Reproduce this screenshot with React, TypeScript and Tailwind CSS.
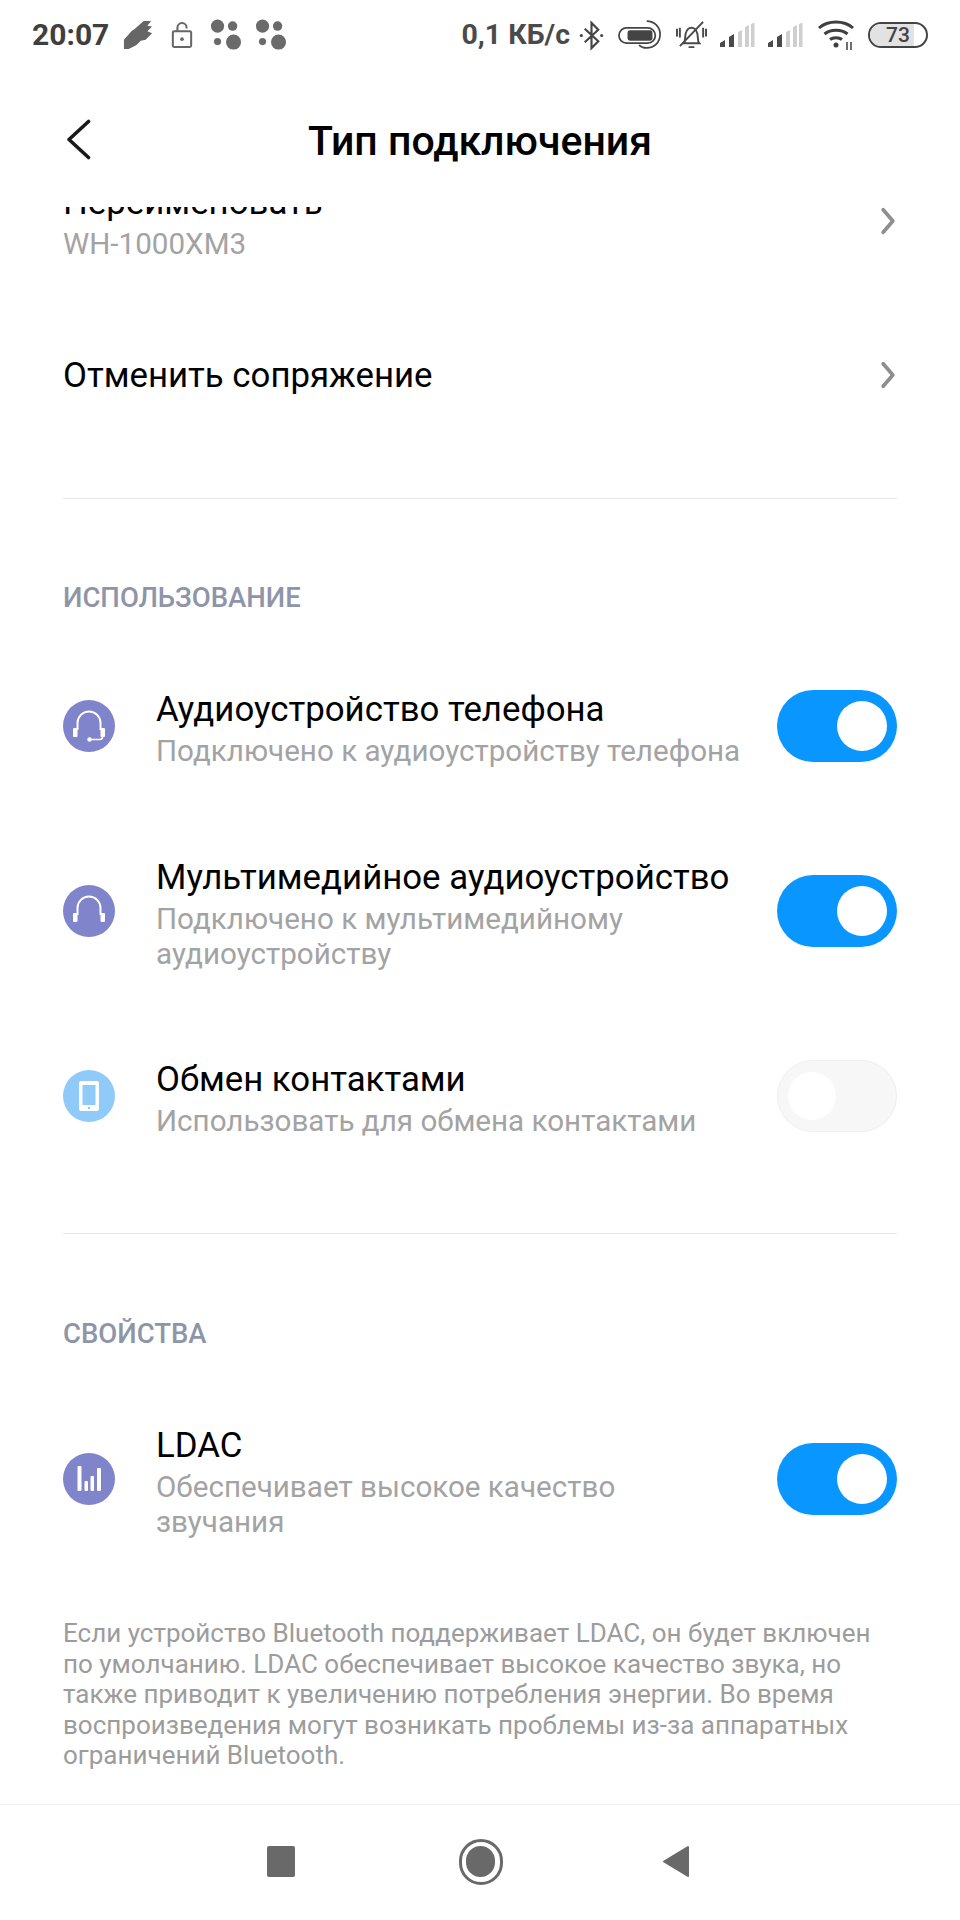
import { ReactNode } from 'react';

const Toggle = ({ on = true }: { on?: boolean }) =>
  on ? (
    <div className="flex h-[72px] w-[120px] shrink-0 items-center justify-end rounded-full bg-[#0a96ff] pr-[10px]">
      <div className="h-[50px] w-[50px] rounded-full bg-white" />
    </div>
  ) : (
    <div className="flex h-[72px] w-[120px] shrink-0 items-center rounded-full border border-[#efefef] bg-[#f7f7f7] pl-[10px]">
      <div className="h-[48px] w-[48px] rounded-full bg-white" />
    </div>
  );

const Chevron = ({ className }: { className?: string }) => (
  <svg viewBox="0 0 14 26" className={className} fill="none" stroke="#8e8e8e" strokeWidth="3.4" strokeLinecap="round" strokeLinejoin="round">
    <path d="M2.5 2.5 11.5 13 2.5 23.5" />
  </svg>
);

const HeadsetIcon = ({ mic = false }: { mic?: boolean }) => (
  <svg viewBox="0 0 52 52" className="h-[52px] w-[52px]">
    <circle cx="26" cy="26" r="26" fill="#7f84cb" />
    <path d="M14.5 30V23a11.5 11.5 0 0 1 23 0v7" fill="none" stroke="#fff" strokeWidth="2" />
    <rect x="10" y="28" width="4.5" height="9" rx="1" fill="#fff" />
    <rect x="37.5" y="28" width="4.5" height="9" rx="1" fill="#fff" />
    {mic && (
      <>
        <path d="M39.5 37q0 2.500-3 2.500H28" fill="none" stroke="#fff" strokeWidth="1.600" />
        <circle cx="26.500" cy="39.500" r="2.200" fill="#fff" />
      </>
    )}
  </svg>
);

const PhoneIcon = () => (
  <svg viewBox="0 0 52 52" className="h-[52px] w-[52px]">
    <circle cx="26" cy="26" r="26" fill="#90caf9" />
    <rect x="16" y="11" width="20" height="30" rx="2" fill="#fff" />
    <rect x="19.500" y="15" width="13" height="20" fill="#90caf9" />
    <circle cx="26" cy="38" r="1.300" fill="#90caf9" />
  </svg>
);

const BarsIcon = () => (
  <svg viewBox="0 0 52 52" className="h-[52px] w-[52px]">
    <circle cx="26" cy="26" r="26" fill="#7f84cb" />
    <rect x="14.500" y="13" width="4" height="25" rx="1" fill="#fff" />
    <rect x="21.500" y="28" width="3.500" height="10" rx="1" fill="#fff" />
    <rect x="27.500" y="23" width="3.500" height="15" rx="1" fill="#fff" />
    <rect x="34" y="15" width="4" height="23" rx="1" fill="#fff" />
  </svg>
);

const Signal = () => (
  <svg viewBox="0 0 36 26" className="h-[26px] w-[36px]">
    <path d="M1 25v-4l5-3v7zM10 25v-10l5-3v13z" fill="#4a4a4a" />
    <path d="M19 25V10l4-2v17zM26 25V5l4-2v22zM32 25V2l3.500-1.500V25z" fill="#cfcfcf" />
  </svg>
);

const DotCluster = () => (
  <svg viewBox="0 0 34 34" className="h-[32px] w-[32px]">
    <circle cx="8" cy="7.500" r="7" fill="#6a6a6a" />
    <circle cx="24" cy="7.500" r="5" fill="#6a6a6a" />
    <circle cx="8" cy="24" r="3.800" fill="#6a6a6a" />
    <circle cx="25" cy="24.500" r="8" fill="#6a6a6a" />
  </svg>
);

const StatusBar = () => (
  <div className="flex h-[70px] shrink-0 items-center justify-between px-[32px] font-['Roboto',sans-serif] text-[#3f3f3f]">
    <div className="flex items-center">
      <span className="text-[30px] font-bold leading-none">20:07</span>
      <svg viewBox="0 0 32 32" className="ml-[14px] h-[30px] w-[30px]">
        <path d="M1 31V21L9 12 13 9 22 1 30 1 26 6 31 7 26 12 31 14 24 21 19 22 14 27 6 31z" fill="#666" />
      </svg>
      <svg viewBox="0 0 24 30" className="ml-[18px] h-[28px] w-[22px]" fill="none" stroke="#666" strokeWidth="2.200">
        <rect x="2" y="11" width="20" height="17" rx="1.500" />
        <path d="M7 11V7a5 5 0 0 1 10 0v1" />
        <circle cx="12" cy="19.500" r="2" fill="#666" stroke="none" />
      </svg>
      <div className="ml-[17px]"><DotCluster /></div>
      <div className="ml-[13px]"><DotCluster /></div>
    </div>
    <div className="flex items-center">
      <span className="text-[28.500px] font-bold leading-none text-[#4a4a4a]">0,1 КБ/с</span>
      <svg viewBox="0 0 26 32" className="ml-[8px] h-[31px] w-[27px]" fill="none" stroke="#444" strokeWidth="2.200">
        <path d="M6 9 20 22 13 29V3l7 7L6 23" />
        <circle cx="2.500" cy="16" r="1.600" fill="#444" stroke="none" />
        <circle cx="23.500" cy="16" r="1.600" fill="#444" stroke="none" />
      </svg>
      <svg viewBox="0 0 46 34" className="ml-[13px] h-[33px] w-[44px]" fill="none" stroke="#444" strokeWidth="1.800">
        <rect x="1" y="9" width="38" height="16" rx="8" />
        <rect x="10" y="11.500" width="26" height="11" rx="2.500" fill="#444" stroke="none" />
        <path d="M30 2c8 0 14 6 14 14s-6 14-14 14c-3 0-6-1-8-3" />
      </svg>
      <svg viewBox="0 0 32 32" className="ml-[14px] h-[31px] w-[31px]" fill="none" stroke="#4a4a4a" strokeWidth="2">
        <path d="M8 24c2-2 1-6 2-10 1-4 3-6 6-6s5 2 6 6c1 4 0 8 2 10zM13 28h6" />
        <path d="M4 27 28 2M1 9v8M4 8v10M31 9v8M28 8v10" />
      </svg>
      <div className="ml-[12px]"><Signal /></div>
      <div className="ml-[12px]"><Signal /></div>
      <svg viewBox="0 0 38 32" className="ml-[14px] h-[32px] w-[38px]" fill="none" stroke="#3f3f3f" strokeWidth="3">
        <path d="M2 9c9-8 25-8 34 0M7.500 15c6-5 17-5 23 0M13 20.500c3-2.500 9-2.500 12 0" />
        <circle cx="19" cy="26" r="2.500" fill="#3f3f3f" stroke="none" />
        <path d="M30 23v8M34 23v8" strokeWidth="1.500" />
      </svg>
      <div className="relative ml-[13px] flex h-[26px] w-[60px] items-center justify-center overflow-hidden rounded-full border-2 border-[#444]">
        <div className="absolute inset-y-0 left-0 w-[78%] bg-[#e2e2e2]" />
        <span className="relative text-[21px] font-medium leading-none text-[#444]">73</span>
      </div>
    </div>
  </div>
);

const Row = ({
  icon,
  title,
  sub,
  on = true,
  className,
}: {
  icon: ReactNode;
  title: string;
  sub: string[];
  on?: boolean;
  className?: string;
}) => (
  <div className={`flex items-center ${className ?? ''}`}>
    <div className="w-[93px] shrink-0">{icon}</div>
    <div className="min-w-0 flex-1 pt-[6px]">
      <div className="text-[34.800px] leading-[42px] text-black">{title}</div>
      <div className="mt-[4px] text-[29.600px] leading-[35px] text-[#a3a3a3]">
        {sub.map((s) => (
          <div key={s}>{s}</div>
        ))}
      </div>
    </div>
    <Toggle on={on} />
  </div>
);

const SectionLabel = ({ children, className }: { children: ReactNode; className?: string }) => (
  <div className={`text-[27.500px] font-medium leading-[32px] text-[#8f95a8] ${className ?? ''}`}>{children}</div>
);

export default function App() {
  return (
    <div className="flex h-[1920px] w-[960px] flex-col overflow-hidden bg-white font-['Roboto',sans-serif]">
      <StatusBar />

      <div className="relative flex h-[137px] shrink-0 items-center justify-center pt-[5px]">
        <svg viewBox="0 0 27 41" className="absolute left-[65px] top-[49px] h-[41px] w-[27px]" fill="none" stroke="#1a1a1a" strokeWidth="3.600" strokeLinecap="round" strokeLinejoin="round">
          <path d="M23.500 2.500 4 20.500l19.500 18" />
        </svg>
        <span className="text-[41px] font-medium leading-none text-black">Тип подключения</span>
      </div>

      <div className="min-h-0 flex-1 overflow-hidden px-[63px]">
        <div className="-mt-[26px] flex items-start justify-between">
          <div>
            <div className="text-[34.800px] leading-[42px] text-black">Переименовать</div>
            <div className="mt-[4px] text-[29.600px] leading-[35px] text-[#a3a3a3]">WH-1000XM3</div>
          </div>
          <Chevron className="mr-[1px] mt-[26px] h-[28px] w-[16px]" />
        </div>

        <div className="mt-[92px] flex items-center justify-between">
          <div className="text-[34.800px] leading-[42px] text-black">Отменить сопряжение</div>
          <Chevron className="mr-[1px] h-[28px] w-[16px]" />
        </div>

        <div className="mt-[102px] h-px bg-[#e6e6e6]" />
        <SectionLabel className="mt-[83px]">ИСПОЛЬЗОВАНИЕ</SectionLabel>

        <Row className="mt-[68px]" icon={<HeadsetIcon mic />} title="Аудиоустройство телефона" sub={['Подключено к аудиоустройству телефона']} />
        <Row className="mt-[81px]" icon={<HeadsetIcon />} title="Мультимедийное аудиоустройство" sub={['Подключено к мультимедийному', 'аудиоустройству']} />
        <Row className="mt-[80px]" icon={<PhoneIcon />} title="Обмен контактами" sub={['Использовать для обмена контактами']} on={false} />

        <div className="mt-[94px] h-px bg-[#e6e6e6]" />
        <SectionLabel className="mt-[84px]">СВОЙСТВА</SectionLabel>

        <Row className="mt-[68px]" icon={<BarsIcon />} title="LDAC" sub={['Обеспечивает высокое качество', 'звучания']} />

        <p className="mt-[78px] text-[26px] leading-[30.500px] text-[#9c9c9c]">
          Если устройство Bluetooth поддерживает LDAC, он будет включен по умолчанию. LDAC обеспечивает высокое качество звука, но также приводит к увеличению потребления энергии. Во время воспроизведения могут возникать проблемы из-за аппаратных ограничений Bluetooth.
        </p>
      </div>

      <div className="flex h-[116px] shrink-0 items-center justify-center border-t border-[#f1f1f1] pb-[2px] pr-[4px]">
        <div className="h-[31px] w-[28px] rounded-[2px] bg-[#696969]" />
        <div className="ml-[164px] flex h-[46px] w-[44px] items-center justify-center rounded-full border-[3px] border-[#696969]">
          <div className="h-[31px] w-[29px] rounded-full bg-[#696969]" />
        </div>
        <svg viewBox="0 0 28 34" className="ml-[159px] h-[35px] w-[28px]">
          <path d="M26 2.500v29L2 17z" fill="#696969" stroke="#696969" strokeWidth="2" strokeLinejoin="round" />
        </svg>
      </div>
    </div>
  );
}
